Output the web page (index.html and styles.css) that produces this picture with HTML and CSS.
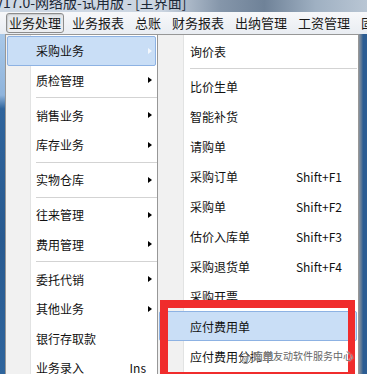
FILE: index.html
```html
<!DOCTYPE html>
<html lang="zh-CN">
<head>
    <meta charset="UTF-8">
    <meta name="viewport" content="width=device-width, initial-scale=1.0">
    <title>主界面</title>
    <link rel="stylesheet" href="styles.css">
</head>
<body>
<div class="screen">
    <div class="titlebar">
        <span class="title-text">V17.0-网络版-试用版 - [主界面]</span>
    </div>

    <div class="menubar">
        <span class="top-item active">业务处理</span>
        <span class="top-item">业务报表</span>
        <span class="top-item">总账</span>
        <span class="top-item">财务报表</span>
        <span class="top-item">出纳管理</span>
        <span class="top-item">工资管理</span>
        <span class="top-item">固定资产</span>
    </div>

    <div class="workspace">
        <div class="edge-left"></div>

        <ul class="menu main-menu">
            <li class="item hover has-sub">采购业务</li>
            <li class="item has-sub">质检管理</li>
            <li class="sep"></li>
            <li class="item has-sub">销售业务</li>
            <li class="item has-sub">库存业务</li>
            <li class="sep"></li>
            <li class="item has-sub">实物仓库</li>
            <li class="sep"></li>
            <li class="item has-sub">往来管理</li>
            <li class="item has-sub">费用管理</li>
            <li class="sep"></li>
            <li class="item has-sub">委托代销</li>
            <li class="item has-sub">其他业务</li>
            <li class="item">银行存取款</li>
            <li class="item">业务录入<span class="key key-ins">Ins</span></li>
        </ul>

        <ul class="menu sub-menu">
            <li class="item">询价表</li>
            <li class="sep"></li>
            <li class="item">比价生单</li>
            <li class="item">智能补货</li>
            <li class="item">请购单</li>
            <li class="item">采购订单<span class="key">Shift+F1</span></li>
            <li class="item">采购单<span class="key">Shift+F2</span></li>
            <li class="item">估价入库单<span class="key">Shift+F3</span></li>
            <li class="item">采购退货单<span class="key">Shift+F4</span></li>
            <li class="item">采购开票</li>
            <li class="item hover">应付费用单</li>
            <li class="item">应付费用分摊单</li>
        </ul>

        <div class="edge-right"></div>
    </div>

    <!--标注框和水印盖在菜单上 -->
    <div class="red-box"></div>
    <div class="watermark"><span class="wm-icon">@</span>南京友动软件服务中心</div>
</div>
</body>
</html>
```

FILE: styles.css
```css
body {
    margin: 0;
    font-family: "Noto Sans CJK SC", "Noto Sans", sans-serif;
    color: #111;
}
.screen {
    position: relative;
    width: 367px;
    height: 374px;
    overflow: hidden;
    background-color: #2d5e95;
}
.titlebar {
    height: 12px;
    overflow: hidden;
    background: linear-gradient(to right, #cfd9e5 0, #cbd5e1 44%, #8596aa 60%, #6f8298 72%, #9fb0c2 86%, #b9c6d4 100%);
}
.title-text {
    display: block;
    margin-top: -6px;
    margin-left: -5px;
    font-size: 14px;
    line-height: 16px;
    color: #1c2836;
    white-space: nowrap;
}
.menubar {
    display: flex;
    align-items: center;
    height: 22px;
    padding-left: 6px;
    background: linear-gradient(#f7f8fa, #e9edf2);
    white-space: nowrap;
    font-size: 13px;
    color: #1a1a1a;
}
.top-item {
    padding: 0 2px;
    margin-right: 5px;
    line-height: 18px;
    border: 1px solid transparent;
}
.top-item.active {
    border-color: #8c8c8c;
    border-radius: 3px;
    background: linear-gradient(#e2e5e9, #eceef1);
    box-shadow: inset 1px 1px 1px rgba(0, 0, 0, 0.12);
}
.workspace {
    display: flex;
    align-items: flex-start;
    height: 340px;
}
.edge-left {
    width: 5px;
    height: 340px;
    background: linear-gradient(#a9c8e8 0, #8fb4dc 18%, #2f649c 22%, #285a90 60%, #2f659d 100%);
}
.edge-right {
    flex: 1;
    height: 340px;
    background: linear-gradient(to right, #8a939d 0, #4d6f94 3px, #2c5d93 4px);
}
.menu {
    list-style: none;
    margin: 0;
    padding: 1px 0 0 0;
    height: 360px;
    box-sizing: border-box;
    border: 1px solid #979797;
    border-bottom: none;
    font-size: 12px;
}
.main-menu {
    width: 153px;
    background: linear-gradient(to right, #f1f1f1 0, #f1f1f1 24px, #e2e3e3 24px, #e2e3e3 25px, #fff 25px);
}
.sub-menu {
    width: 201px;
    border-left: none;
    background: linear-gradient(to right, #f1f1f1 0, #f1f1f1 25px, #e2e3e3 25px, #e2e3e3 26px, #fff 26px);
}
.item {
    display: flex;
    align-items: center;
    margin: 0 1px;
    border: 1px solid transparent;
    border-radius: 2px;
    box-sizing: border-box;
    white-space: nowrap;
}
.main-menu .item {
    height: 29.5px;
    padding: 0 3px 0 28px;
}
.sub-menu .item {
    height: 30px;
    padding: 0 14px 0 30px;
}
.item.hover {
    border-color: #8db2e3;
    background-color: #c9def6;
}
.has-sub::after {
    content: "";
    margin-left: auto;
    border-left: 4px solid #000;
    border-top: 3.5px solid transparent;
    border-bottom: 3.5px solid transparent;
}
.has-sub.hover::after {
    border-left-color: #f4f8fd;
}
.key {
    margin-left: auto;
    font-size: 12px;
}
.key-ins {
    margin-right: 6px;
}
.sep {
    background: linear-gradient(transparent 2px, #d3d3d3 2px, #d3d3d3 3px, #fff 3px, #fff 4px, transparent 4px);
}
.main-menu .sep {
    height: 5.5px;
    margin-left: 30px;
}
.sub-menu .sep {
    height: 5px;
    margin-left: 32px;
    margin-right: 1px;
}
.red-box {
    position: absolute;
    left: 160px;
    top: 300px;
    width: 195px;
    height: 80px;
    box-sizing: border-box;
    border: 8px solid #f02c2c;
    border-right-width: 7px;
}
.watermark {
    position: absolute;
    left: 240px;
    top: 350px;
    font-size: 10px;
    line-height: 12px;
    color: #666;
    text-shadow: 0 0 2px #fff, 0 0 1px #fff;
    white-space: nowrap;
}
.wm-icon {
    display: inline-block;
    width: 9px;
    height: 9px;
    margin-right: 2px;
    border: 1px solid #777;
    border-radius: 50%;
    font-size: 7px;
    line-height: 9px;
    text-align: center;
    vertical-align: -1px;
}
```
